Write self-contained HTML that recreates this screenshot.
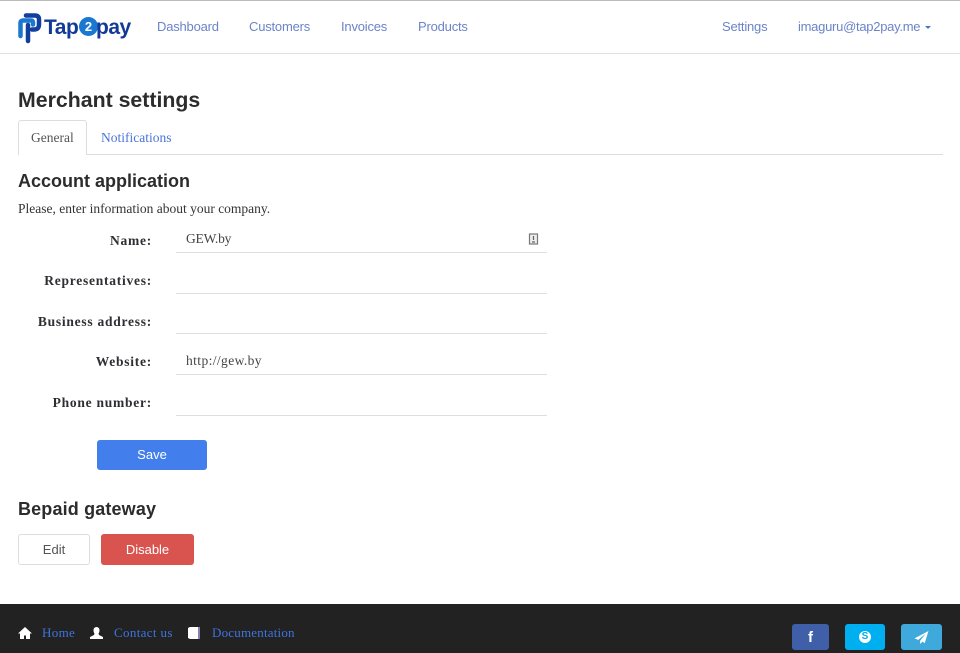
<!DOCTYPE html>
<html><head><meta charset="utf-8"><style>
html,body{margin:0;padding:0;background:#fff}
#p{position:relative;width:960px;height:653px;overflow:hidden;background:#fff;font-family:"Liberation Sans",sans-serif}
#p>*{position:absolute}
.t{white-space:nowrap;line-height:18px}
.n{font-size:13px;color:#6b84c9;top:18px;letter-spacing:-.2px}
.h{font-weight:bold;color:#2c2c2c}
.s{font-family:"Liberation Serif",serif}
.l{font-family:"Liberation Serif",serif;font-weight:bold;font-size:13.5px;color:#2f2f33;right:808px;letter-spacing:.75px}
.u{left:176px;width:371px;height:1px;background:#dedede}
.v{font-family:"Liberation Serif",serif;font-size:13.5px;color:#444;left:186px}
.b{border-radius:3px;text-align:center;font-size:13px;box-sizing:border-box}
.f{font-family:"Liberation Serif",serif;font-size:13px;color:#3f74e0;top:624px;letter-spacing:.35px}
</style></head><body><div id="p">
<div style="left:0;top:0;width:960px;height:1px;background:#bbb"></div>
<div style="left:0;top:53px;width:960px;height:1px;background:#e2e2e2"></div>
<svg style="left:17px;top:11px" width="26" height="33" viewBox="0 0 26 33"><path d="M3.5 25V12q0-2.5 2.5-2.5h8q2 0 2 2v2" fill="none" stroke="#1a78d0" stroke-width="4.5" stroke-linecap="round"/><path d="M9 4.5h9q4 0 4 4v5q0 5-5 5h-2M11 14v16" fill="none" stroke="#123f9e" stroke-width="4.5" stroke-linecap="round"/></svg>
<div class="t" style="left:44px;top:17px;font-size:21px;line-height:22px;font-weight:bold;color:#123a96;letter-spacing:-.5px">Tap</div>
<div style="left:79px;top:17px;width:19px;height:19px;border-radius:50%;background:#1a78d0;color:#fff;font-size:13px;font-weight:bold;text-align:center;line-height:20px">2</div>
<div class="t" style="left:96px;top:17px;font-size:21px;line-height:22px;font-weight:bold;color:#123a96;letter-spacing:-.5px">pay</div>
<div class="t n" style="left:157px">Dashboard</div>
<div class="t n" style="left:249px">Customers</div>
<div class="t n" style="left:341px">Invoices</div>
<div class="t n" style="left:418px">Products</div>
<div class="t n" style="left:722px">Settings</div>
<div class="t n" style="left:798px;letter-spacing:-.27px">imaguru@tap2pay.me</div>
<div style="left:925px;top:26px;width:0;height:0;border:3px solid transparent;border-top:3px solid #4a74d0;border-bottom:0"></div>
<div class="t h" style="left:18px;top:87px;font-size:21.3px;line-height:26px">Merchant settings</div>
<div style="left:18px;top:154px;width:925px;height:1px;background:#ddd"></div>
<div style="left:18px;top:120px;width:69px;height:35px;box-sizing:border-box;background:#fff;border:1px solid #ddd;border-bottom:0;border-radius:3px 3px 0 0"></div>
<div class="t s" style="left:31px;top:129px;font-size:13.5px;color:#555">General</div>
<div class="t s" style="left:101px;top:129px;font-size:13.5px;color:#4a74d8">Notifications</div>
<div class="t h" style="left:18px;top:170px;font-size:18px;line-height:22px">Account application</div>
<div class="t s" style="left:18px;top:200px;font-size:13.5px;color:#333">Please, enter information about your company.</div>
<div class="t l" style="top:232px">Name:</div>
<div class="t l" style="top:272px">Representatives:</div>
<div class="t l" style="top:313px">Business address:</div>
<div class="t l" style="top:353px">Website:</div>
<div class="t l" style="top:394px">Phone number:</div>
<div class="u" style="top:252px"></div>
<div class="u" style="top:293px"></div>
<div class="u" style="top:333px"></div>
<div class="u" style="top:374px"></div>
<div class="u" style="top:415px"></div>
<div class="t v" style="top:230px;letter-spacing:-.2px">GEW.by</div>
<div class="t v" style="top:352px;letter-spacing:.4px">http://gew.by</div>
<svg style="left:528px;top:233px" width="11" height="12" viewBox="0 0 11 12"><rect x="1.5" y="1" width="8" height="10" fill="#eee" stroke="#777" stroke-width="1.2"/><path d="M5.5 3v4M4 9h3" stroke="#666" stroke-width="1.3"/></svg>
<div class="b" style="left:97px;top:440px;width:110px;height:30px;background:#427fed;color:#fff;line-height:29px">Save</div>
<div class="t h" style="left:18px;top:498px;font-size:18px;line-height:22px;letter-spacing:.15px">Bepaid gateway</div>
<div class="b" style="left:18px;top:534px;width:72px;height:31px;border:1px solid #ddd;color:#555;line-height:29px">Edit</div>
<div class="b" style="left:101px;top:534px;width:93px;height:31px;background:#d9534f;color:#fff;line-height:31px">Disable</div>
<div style="left:0;top:604px;width:960px;height:49px;background:#222"></div>
<svg style="left:18px;top:627px" width="14" height="12" viewBox="0 0 14 12"><path d="M7 0L0 6.5h2V12h4V8.5h2V12h4V6.5h2z" fill="#fff"/></svg>
<div class="t f" style="left:42px">Home</div>
<svg style="left:90px;top:627px" width="13" height="12" viewBox="0 0 13 12"><path d="M3.5 3a3 3 0 0 1 6 0Q9.5 5.500 8.500 6.500l.5 1.500 4 2v2H0v-2l4-2 .5-1.500Q3.500 5.500 3.500 3z" fill="#fff"/></svg>
<div class="t f" style="left:114px">Contact us</div>
<svg style="left:188px;top:627px" width="12" height="12" viewBox="0 0 12 12"><path d="M0 1l2-1h8v12H2l-2-1z" fill="#fff"/><path d="M10 0h2v12h-2z" fill="#8a7fb0"/></svg>
<div class="t f" style="left:212px;letter-spacing:.2px">Documentation</div>
<div class="b" style="left:792px;top:624px;width:37px;height:26px;background:#3f5fa8;color:#fff;font-weight:bold;font-size:15px;line-height:27px">f</div>
<div class="b" style="left:845px;top:624px;width:40px;height:26px;background:#00aff0"></div>
<div style="left:859px;top:631px;width:12px;height:12px;border-radius:50%;background:#fff;color:#00aff0;font-size:10px;font-weight:bold;text-align:center;line-height:12px">S</div>
<div class="b" style="left:901px;top:624px;width:41px;height:26px;background:#3fa9dc"></div>
<svg style="left:914px;top:631px" width="15" height="13" viewBox="0 0 15 14"><path d="M15 0L0 8l4 1.500L12 3 6 10.500V14l2.500-2.500L11 13z" fill="#fff"/></svg>
</div></body></html>
